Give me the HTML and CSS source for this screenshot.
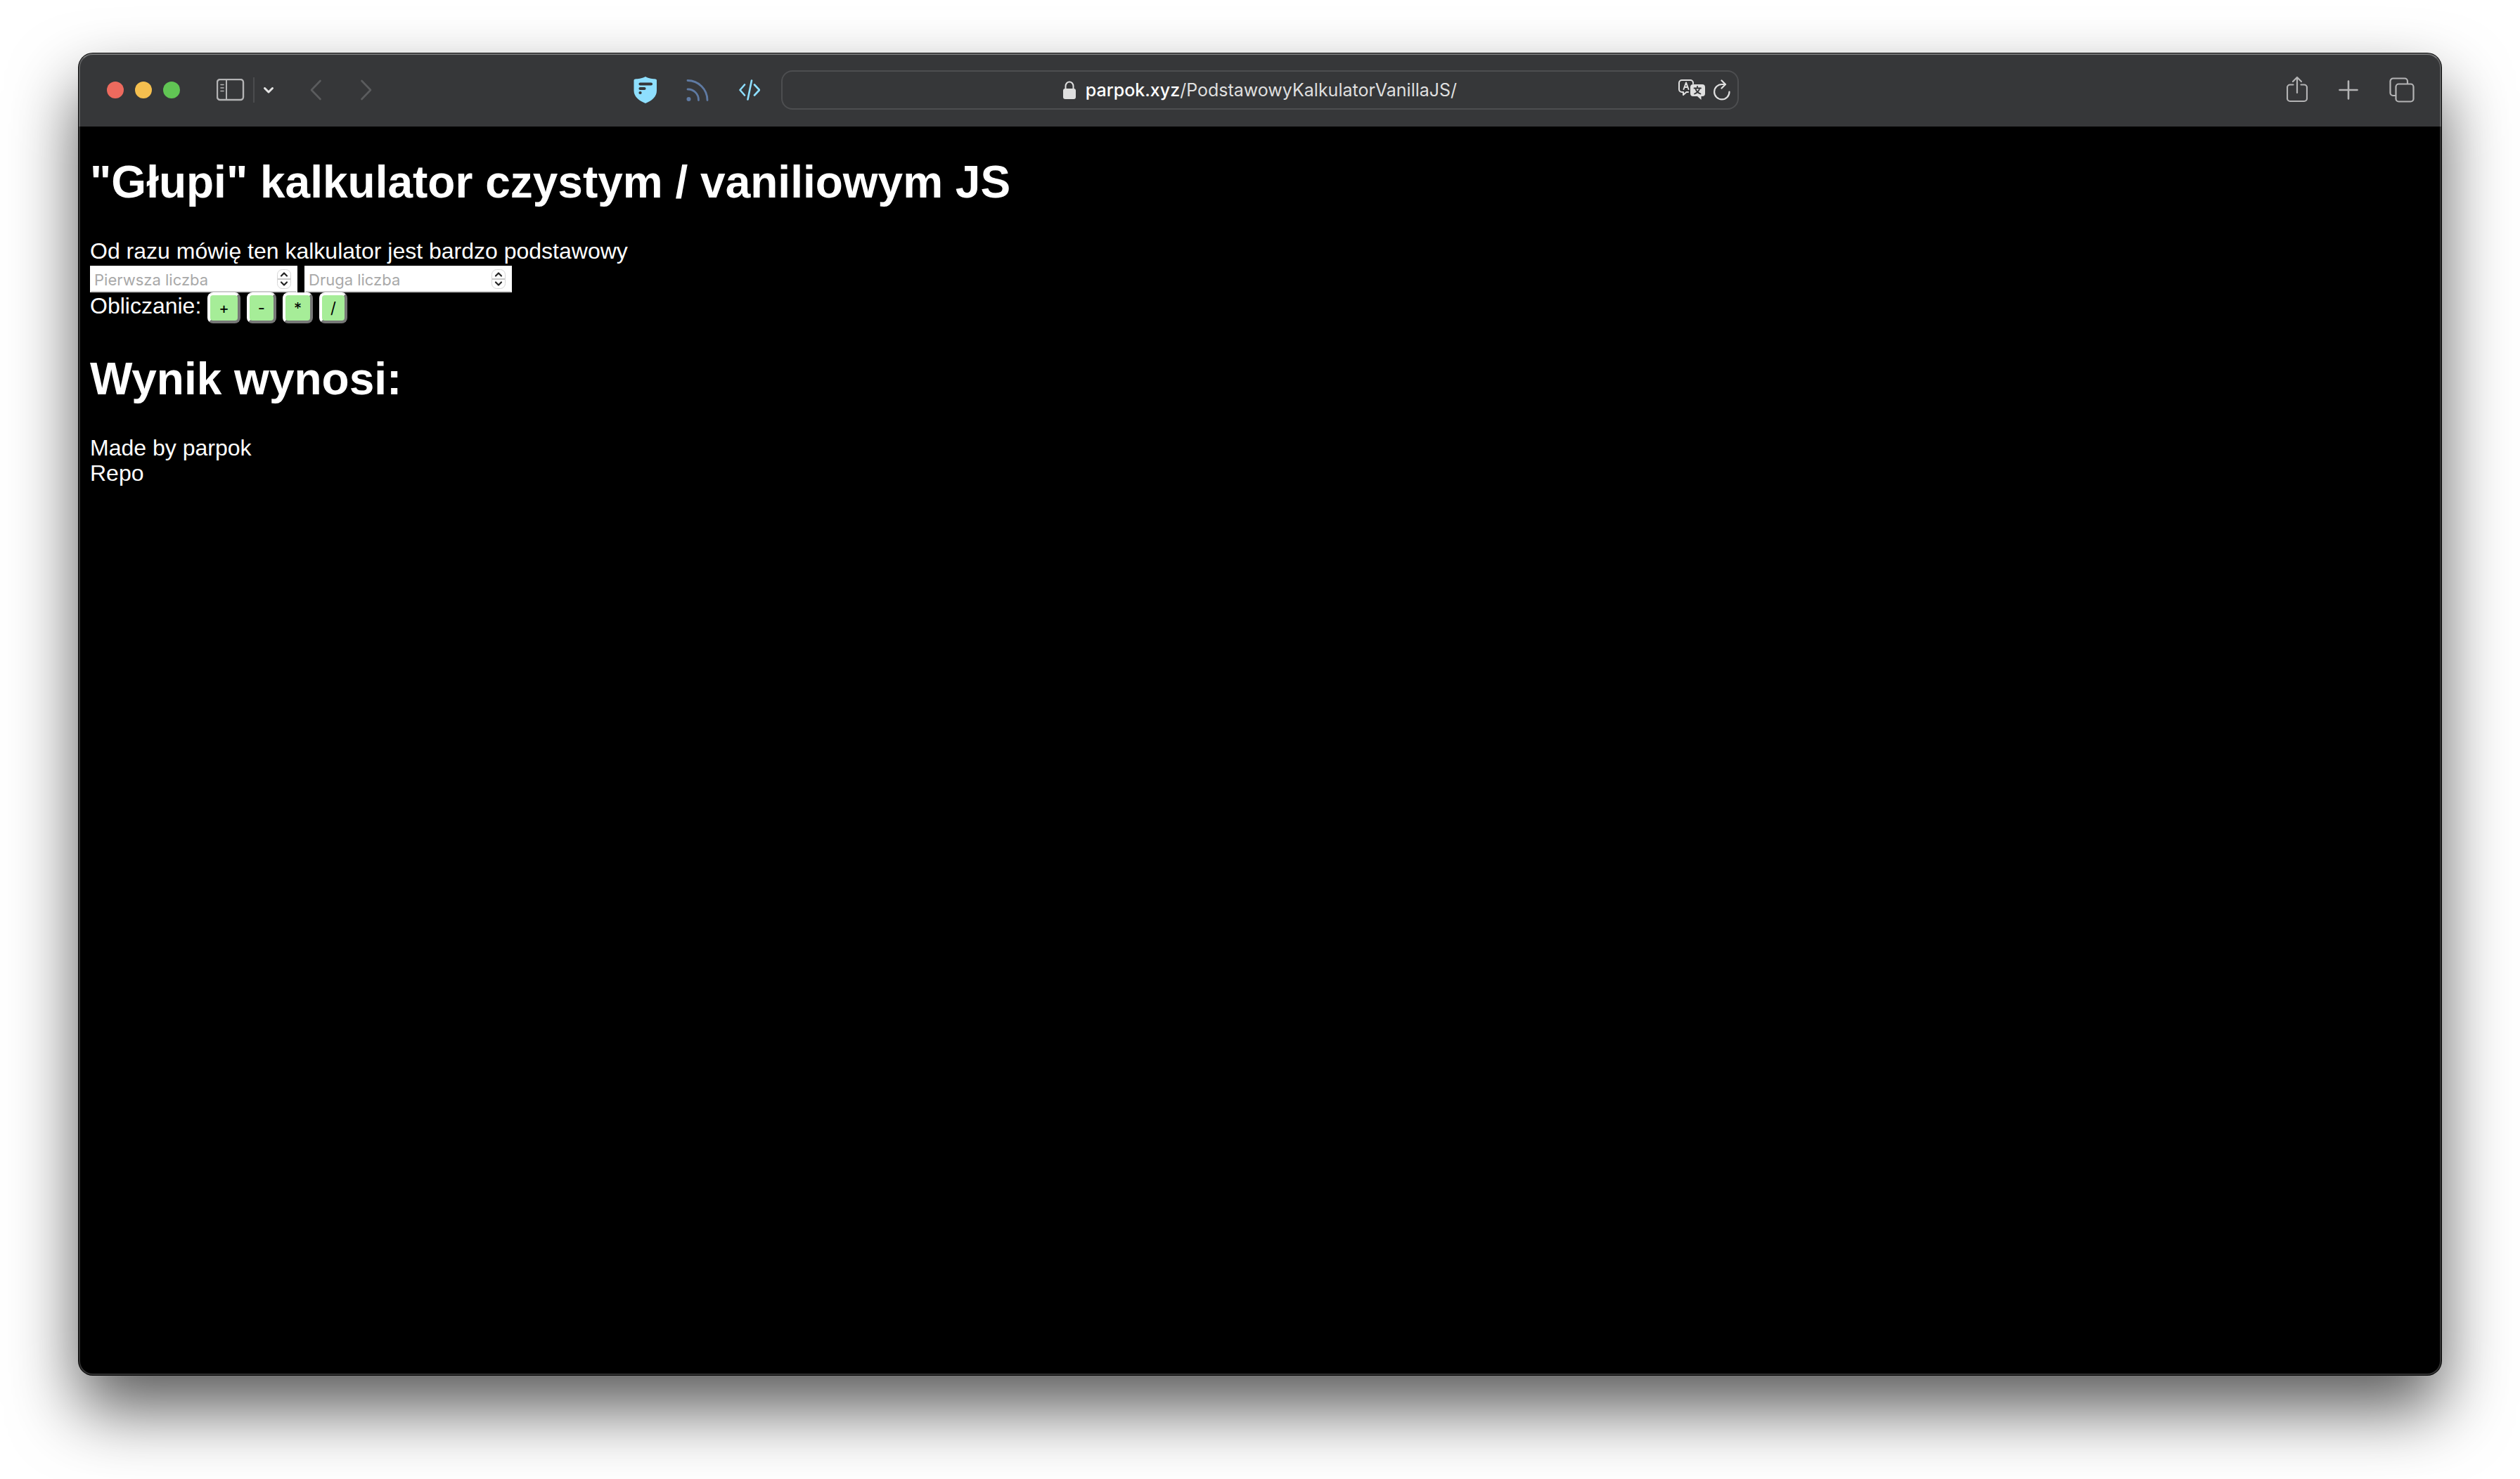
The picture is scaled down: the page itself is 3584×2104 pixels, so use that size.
FILE: index.html
```html
<!DOCTYPE html>
<html lang="pl">
<head>
<meta charset="utf-8">
<meta name="viewport" content="width=device-width, initial-scale=1">
<title>Podstawowy kalkulator</title>
<link rel="stylesheet" href="styles.css">
</head>
<body>
<div class="window">
  <header class="toolbar">
    <div class="side">
      <div class="lights">
        <button class="light red" aria-label="Zamknij"></button>
        <button class="light yellow" aria-label="Minimalizuj"></button>
        <button class="light green" aria-label="Powiększ"></button>
      </div>
      <div class="sidebar-group">
        <button class="icon" aria-label="Pasek boczny">
          <svg width="40" height="32" viewBox="0 0 40 32" fill="none" stroke="#b4b4b5" stroke-width="2" stroke-linecap="round"><rect x="1" y="1" width="37" height="29" rx="4" stroke-width="2.4"/><path d="M14 1v29"/><path d="M6 8.500h4M6 13h4M6 17.500h4" stroke-width="1.600"/></svg>
        </button>
        <span class="separator"></span>
        <button class="icon" aria-label="Grupy kart">
          <svg width="16" height="12" viewBox="0 0 16 12" fill="none" stroke="#e4e4e4" stroke-width="3" stroke-linecap="round" stroke-linejoin="round"><path d="M2.500 3.500 8 9l5.500-5.500"/></svg>
        </button>
      </div>
      <nav class="history">
        <button class="icon" aria-label="Wstecz">
          <svg width="18" height="32" viewBox="0 0 18 32" fill="none" stroke="#5b5c5e" stroke-width="2.600" stroke-linecap="round" stroke-linejoin="round"><path d="M15.500 3 3 16l12.500 13"/></svg>
        </button>
        <button class="icon" aria-label="Dalej">
          <svg width="18" height="32" viewBox="0 0 18 32" fill="none" stroke="#5b5c5e" stroke-width="2.600" stroke-linecap="round" stroke-linejoin="round"><path d="M2.500 3 15 16 2.500 29"/></svg>
        </button>
      </nav>
      <div class="extensions">
        <button class="icon" aria-label="Blokada reklam">
          <svg width="34" height="38" viewBox="0 0 34 38"><path fill="#8edfff" d="M17 0C11.500 2.800 6 3.200 2.500 3.400 1.300 3.500.500 4.200.500 5.400V20c0 9 8 14.500 16.500 18C25.500 34.500 33 29 33 20V5.400c0-1.200-.700-1.900-1.900-2C27.500 3.200 22 2.800 17 0z"/><path d="M9.500 10.500h15.500M9.500 17h6M9.500 23h.100" stroke="#363739" stroke-width="4.200" stroke-linecap="round"/></svg>
        </button>
        <button class="icon" aria-label="Kanały RSS">
          <svg width="34" height="34" viewBox="0 0 34 34" fill="none" stroke="#5f7aa3" stroke-width="2.800" stroke-linecap="round"><circle cx="4.500" cy="30" r="3" fill="#5f7aa3" stroke="none"/><path d="M3 16a15 15 0 0 1 15.500 15.500M3 3.500A28 28 0 0 1 31 31.500"/></svg>
        </button>
        <button class="icon" aria-label="Narzędzia programisty">
          <svg width="32" height="30" viewBox="0 0 32 30" fill="none" stroke="#8edfff" stroke-width="2.600" stroke-linecap="round" stroke-linejoin="round"><path d="M10 7.500 3.500 15l6.500 7.500M24 7.500 31 15l-7 7.500M20 1.500 14.500 28.500"/></svg>
        </button>
      </div>
    </div>
    <div class="address">
      <a class="url" href="#">
        <svg width="18" height="26" viewBox="0 0 18 26"><rect y="11" width="18" height="15" rx="3" fill="#dfdfdf"/><path d="M3.500 12V7.500a5.500 6 0 0 1 11 0V12" fill="none" stroke="#dfdfdf" stroke-width="2"/></svg>
        <span class="url-text"><span class="host">parpok.xyz</span>/PodstawowyKalkulatorVanillaJS/</span>
      </a>
      <div class="address-tools">
        <button class="icon" aria-label="Przetłumacz">
          <svg width="38" height="30" viewBox="0 0 38 30" fill="none" stroke="#dfdfdf" stroke-width="2" stroke-linecap="round" stroke-linejoin="round"><path d="M14 18h-2.500L7 22v-4H5a4 4 0 0 1-4-4V5a4 4 0 0 1 4-4h12a4 4 0 0 1 4 4v1"/><path d="M7.500 14 11 4.500 14.500 14M8.700 11h4.600"/><path fill="#dfdfdf" stroke="none" d="M21 7h13a4 4 0 0 1 4 4v9a4 4 0 0 1-4 4h-1.500v5L27 24h-6a4 4 0 0 1-4-4v-9a4 4 0 0 1 4-4z"/><path stroke="#363739" stroke-width="1.800" d="M22.500 12.500h9.500M27 10v2M23 20.500c4-1.600 6.500-4.400 7.200-8M31.500 20.500c-4-1.600-6.500-4.400-7.200-8"/></svg>
        </button>
        <button class="icon" aria-label="Odśwież">
          <svg width="24" height="30" viewBox="0 0 24 30" fill="none" stroke="#dfdfdf" stroke-width="2.200" stroke-linecap="round" stroke-linejoin="round"><path d="M22.500 17.500A10.700 10.700 0 1 1 12 7h4.500"/><path d="m11.500 1.500 5.500 5.500-5.500 5.500"/></svg>
        </button>
      </div>
    </div>
    <div class="actions">
      <button class="icon" aria-label="Udostępnij">
        <svg width="30" height="40" viewBox="0 0 30 40" fill="none" stroke="#b4b4b5" stroke-width="2.200" stroke-linecap="round" stroke-linejoin="round"><path d="M9.500 12.500H5a4 4 0 0 0-4 4V32a4 4 0 0 0 4 4h20a4 4 0 0 0 4-4V16.500a4 4 0 0 0-4-4h-4.500M15 24V2M9 8l6-6 6 6"/></svg>
      </button>
      <button class="icon" aria-label="Nowa karta">
        <svg width="28" height="28" viewBox="0 0 28 28" fill="none" stroke="#b4b4b5" stroke-width="2.600" stroke-linecap="round"><path d="M14 1.500v25M1.500 14h25"/></svg>
      </button>
      <button class="icon" aria-label="Przegląd kart">
        <svg width="36" height="36" viewBox="0 0 36 36" fill="none" stroke="#b4b4b5" stroke-width="2.200"><rect x="9.500" y="9.500" width="25" height="25" rx="4"/><path d="M9 26H5.500a4 4 0 0 1-4-4V5.500a4 4 0 0 1 4-4H22a4 4 0 0 1 4 4V9"/></svg>
      </button>
    </div>
  </header>
  <main class="page">
    <h1>"Głupi" kalkulator czystym / vaniliowym JS</h1>
    <p>Od razu mówię ten kalkulator jest bardzo podstawowy</p>
    <div class="fields">
      <div class="field">
        <input type="number" placeholder="Pierwsza liczba" aria-label="Pierwsza liczba">
        <svg class="spinner" width="20" height="28" viewBox="0 0 20 28"><rect x=".5" y=".5" width="19" height="27" rx="7" fill="#fff" stroke="#d6d6d6"/><path d="M1 14h18" stroke="#c8c8c8" stroke-width="2"/><path d="m6 9.500 4-4 4 4M6 18.500l4 4 4-4" fill="none" stroke="#222" stroke-width="2.200" stroke-linecap="round" stroke-linejoin="round"/></svg>
      </div>
      <div class="field">
        <input type="number" placeholder="Druga liczba" aria-label="Druga liczba">
        <svg class="spinner" width="20" height="28" viewBox="0 0 20 28"><rect x=".5" y=".5" width="19" height="27" rx="7" fill="#fff" stroke="#d6d6d6"/><path d="M1 14h18" stroke="#c8c8c8" stroke-width="2"/><path d="m6 9.500 4-4 4 4M6 18.500l4 4 4-4" fill="none" stroke="#222" stroke-width="2.200" stroke-linecap="round" stroke-linejoin="round"/></svg>
      </div>
    </div>
    <div class="operations">
      <span>Obliczanie:</span>
      <button class="op">+</button>
      <button class="op">-</button>
      <button class="op">*</button>
      <button class="op">/</button>
    </div>
    <h1>Wynik wynosi:</h1>
    <p>Made by parpok</p>
    <p><a href="#">Repo</a></p>
  </main>
</div>
</body>
</html>
```

FILE: styles.css
```css
* {
  box-sizing: border-box;
}

body {
  margin: 0;
  min-height: 100vh;
  padding: 76px 112px 148px;
  display: flex;
  background: #fff;
  color: #fff;
  font-family: "Liberation Sans", Arial, sans-serif;
  font-size: 32px;
  line-height: 36px;
}

button {
  margin: 0;
  font: inherit;
}

a {
  color: inherit;
  text-decoration: none;
}

svg {
  display: block;
  flex: none;
}

/* Browser window */
.window {
  position: relative;
  flex: 1;
  min-width: 0;
  display: flex;
  flex-direction: column;
  border-radius: 20px;
  background: #000;
  box-shadow: 0 0 0 1px #000, 0 48px 96px rgba(0, 0, 0, .65);
}

.window::after {
  content: "";
  position: absolute;
  inset: 0;
  border: 2px solid rgba(255, 255, 255, .2);
  border-top-color: rgba(255, 255, 255, .32);
  border-radius: 20px;
  pointer-events: none;
}

.toolbar {
  display: grid;
  grid-template-columns: 999fr 1362fr 999fr;
  align-items: center;
  height: 104px;
  border-radius: 20px 20px 0 0;
  background: #363739;
}

.icon {
  padding: 0;
  border: 0;
  background: none;
}

.side {
  display: flex;
  align-items: center;
  padding: 0 30px 0 40px;
}

.lights {
  display: flex;
  gap: 16px;
  margin-right: 52px;
}

.light {
  width: 24px;
  height: 24px;
  padding: 0;
  border: 0;
  border-radius: 50%;
}

.red { background: #ed6a5e; }
.yellow { background: #f5bf4f; }
.green { background: #61c554; }

.sidebar-group {
  display: flex;
  align-items: center;
  gap: 12px;
  margin-right: 50px;
}

.separator {
  width: 2px;
  height: 36px;
  background: #4b4c4e;
}

.history {
  display: flex;
  gap: 54px;
}

.extensions {
  display: flex;
  align-items: center;
  gap: 40px;
  margin-left: auto;
}

.address {
  display: grid;
  grid-template-columns: 1fr auto 1fr;
  align-items: center;
  height: 56px;
  padding: 0 10px;
  border: 2px solid #4d4e50;
  border-radius: 16px;
}

.url {
  grid-column: 2;
  display: flex;
  align-items: center;
  gap: 14px;
  color: #dfdfdf;
  font-family: Inter, sans-serif;
  font-size: 25px;
}

.host {
  color: #fff;
  font-weight: 500;
}

.address-tools {
  justify-self: end;
  display: flex;
  align-items: center;
  gap: 12px;
}

.actions {
  display: flex;
  align-items: center;
  justify-content: flex-end;
  gap: 44px;
  padding-right: 38px;
}

/* Calculator page */
.page {
  flex: 1;
  padding: 0 16px 16px;
}

h1 {
  margin: 42px 0 43px;
  font-size: 64px;
  line-height: 74px;
}

p {
  margin: 0;
}

.fields {
  display: flex;
  gap: 10px;
  margin-top: 3px;
}

.field {
  position: relative;
  width: 295px;
}

.field input {
  display: block;
  width: 100%;
  height: 38px;
  padding: 2px 36px 0 4px;
  border: 2px solid #fff;
  border-bottom-color: #ccc;
  background: #fff;
  color: #000;
  font-family: Inter, sans-serif;
  font-size: 22px;
  appearance: textfield;
}

.field input::placeholder {
  color: #a9a9a9;
}

.spinner {
  position: absolute;
  top: 5px;
  right: 9px;
}

.operations {
  display: flex;
  gap: 9px;
  height: 44px;
  line-height: 38px;
}

.op {
  height: 44px;
  padding: 0 12px;
  border: 4px solid;
  border-color: #fff #767676 #767676 #fff;
  border-radius: 8px;
  background: #a6ed98;
  color: #000;
  font-family: Inter, sans-serif;
  font-size: 22px;
  line-height: 32px;
}
```
